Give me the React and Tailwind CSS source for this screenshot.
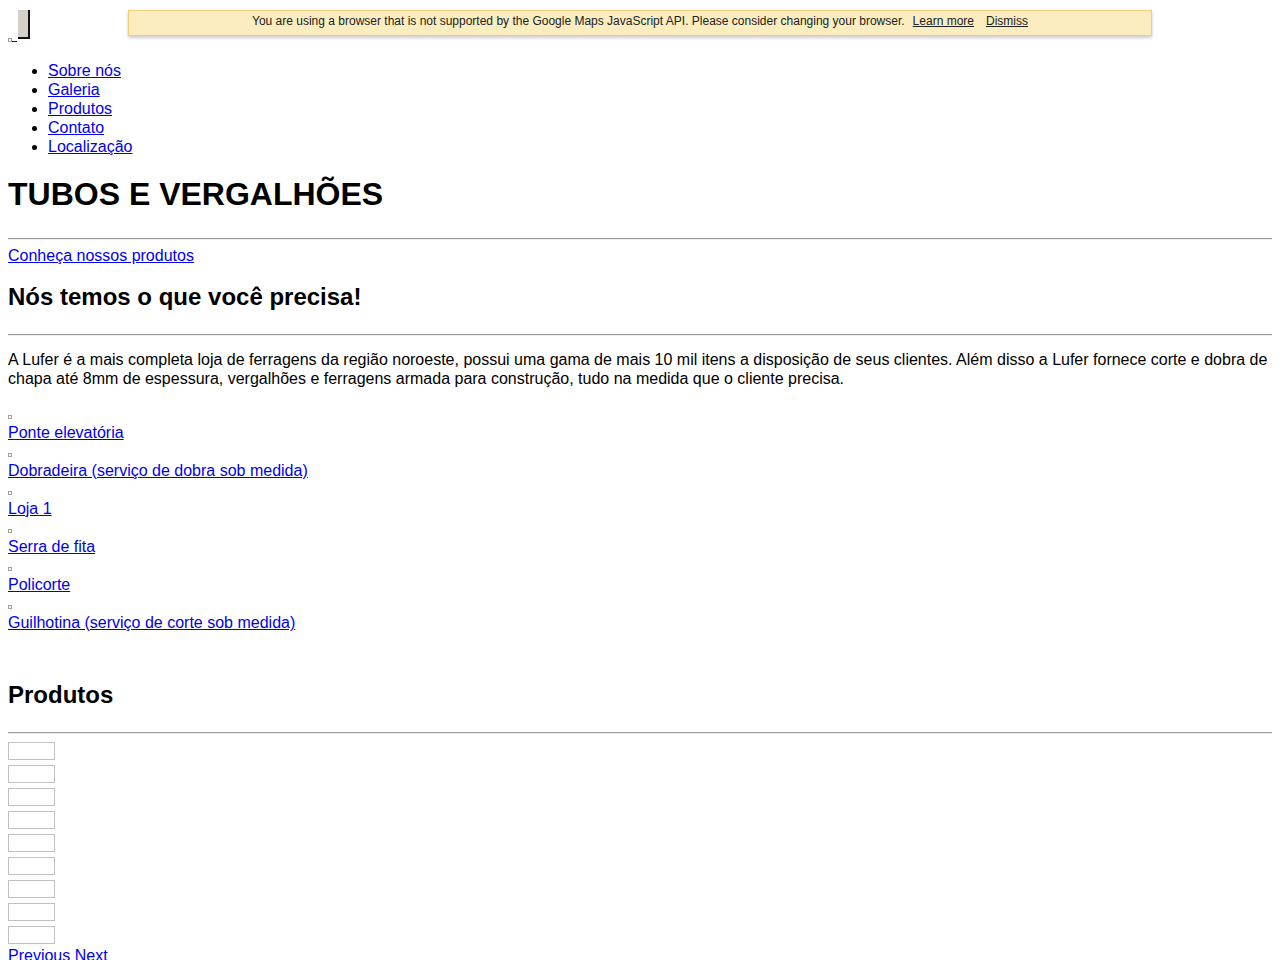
import React from 'react'

const servicos = [
  'Ponte elevatória',
  'Dobradeira (serviço de dobra sob medida)',
  'Loja 1 ',
  'Serra de fita',
  'Policorte',
  'Guilhotina (serviço de corte sob medida)',
]

const menu = ['Sobre nós', 'Galeria', 'Produtos', 'Contato', 'Localização']

const link = 'text-[#0000ee] underline'

function Broken() {
  return <span className="inline-block w-[4px] h-[4px] border border-[#a0a0a0] bg-white" />
}

function Hr({ className = '' }) {
  return <div className={`h-[2px] border-t border-t-[#9a9a9a] border-b border-b-[#eeeeee] ${className}`} />
}

export default function App() {
  return (
    <div className="relative bg-white min-h-[960px] px-[8px] pt-[8px] font-['Liberation_Sans',Arial,sans-serif] text-[16px] leading-[19px] text-black">
      {/* top bar: logo placeholder + menu toggle */}
      <div className="flex items-end h-[37px]">
        <a className={`${link} flex items-end pb-[3px]`}>
          <Broken />
          <span className="inline-block w-[5px] h-[1px] bg-[#0000ee]" />
        </a>
        <div className="ml-[1px] mb-[6px] w-[12px] h-[29px] bg-[#d4d0c8] border-r-2 border-b-2 border-r-[#111] border-b-[#111]" />
      </div>

      {/* google maps warning */}
      <div className="absolute left-[128px] top-[10px] w-[1024px] h-[26px] bg-[#fbedbf] border border-[#f0cd7e] shadow-[0_2px_3px_rgba(0,0,0,0.2)] flex items-start pt-[3px] justify-center text-[12px] leading-[15px] text-[#222]">
        <span>You are using a browser that is not supported by the Google Maps JavaScript API. Please consider changing your browser.</span>
        <a className="underline ml-[8px]">Learn more</a>
        <a className="underline ml-[12px]">Dismiss</a>
      </div>

      <ul className="mt-[16px] pl-[40px] list-disc">
        {menu.map(m => (
          <li key={m}><a className={link}>{m}</a></li>
        ))}
      </ul>

      <h1 className="mt-[20px] text-[32px] leading-[37px] font-bold">TUBOS E VERGALHÕES</h1>
      <Hr className="mt-[25px]" />
      <div className="mt-[6px]"><a className={link}>Conheça nossos produtos</a></div>

      <h2 className="mt-[18px] text-[24px] leading-[28px] font-bold">Nós temos o que você precisa!</h2>
      <Hr className="mt-[23px]" />
      <p className="mt-[14px]">
        A Lufer é a mais completa loja de ferragens da região noroeste, possui uma gama de mais 10 mil itens a disposição de seus clientes. Além disso a Lufer fornece corte e dobra de chapa até 8mm de espessura, vergalhões e ferragens armada para construção, tudo na medida que o cliente precisa.
      </p>

      <div className="mt-[16px]">
        {servicos.map(s => (
          <div key={s}>
            <div className="h-[19px] flex items-end pb-[4px]"><Broken /></div>
            <div><a className={link}>{s}</a></div>
          </div>
        ))}
      </div>

      <h2 className="mt-[49px] text-[24px] leading-[28px] font-bold">Produtos</h2>
      <Hr className="mt-[23px]" />

      <div className="mt-[8px] flex flex-col gap-[5px]">
        {Array.from({ length: 9 }).map((_, i) => (
          <div key={i} className="w-[47px] h-[18px] border border-[#c0c0c0] bg-white" />
        ))}
      </div>
      <div className="mt-[2px]">
        <a className={link}>Previous</a> <a className={link}>Next</a>
      </div>
    </div>
  )
}
